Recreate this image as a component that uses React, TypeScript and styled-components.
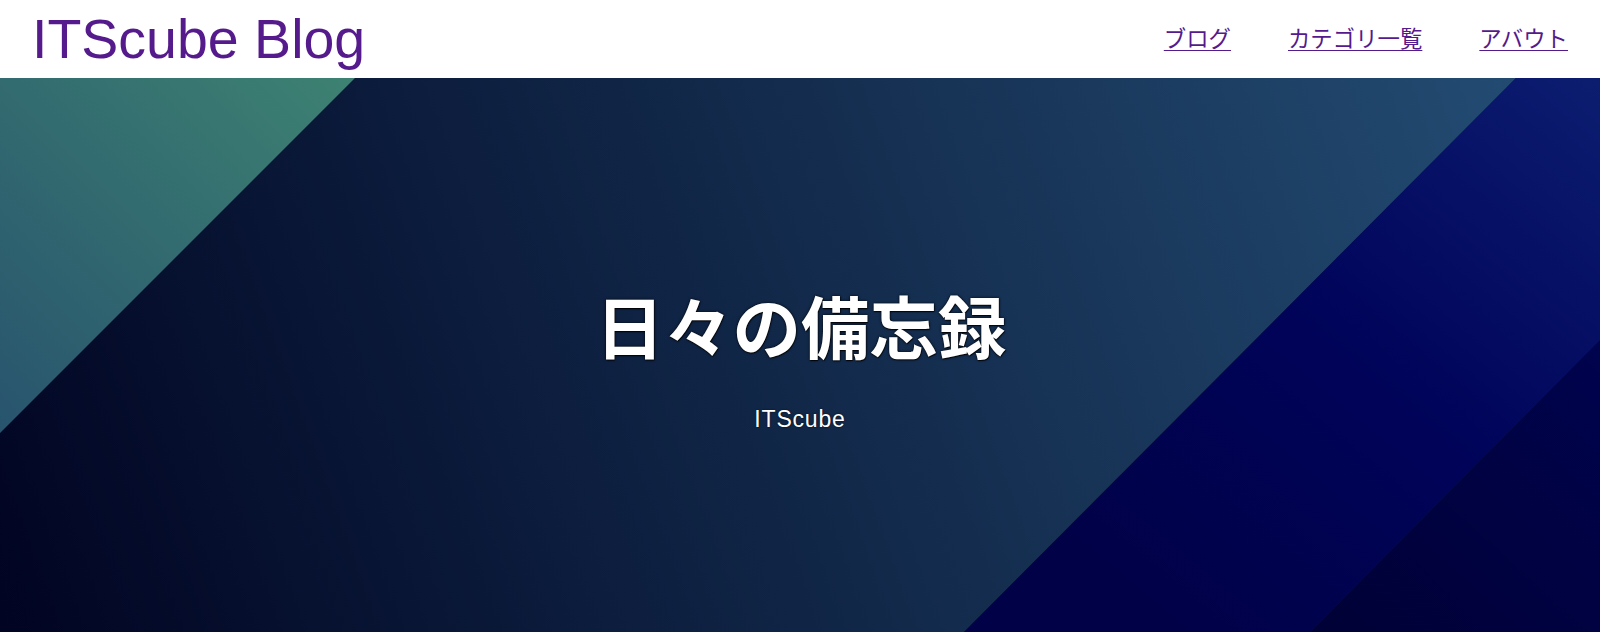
import React from "react";
import styled, { createGlobalStyle } from "styled-components";

const GlobalStyle = createGlobalStyle`
  html, body {
    margin: 0;
    padding: 0;
    background: #ffffff;
    font-family: "Liberation Sans", "Noto Sans CJK JP", sans-serif;
  }
  * { box-sizing: border-box; }
`;

const Page = styled.div`
  display: flex;
  flex-direction: column;
  min-height: 100vh;
`;

const Header = styled.header`
  display: flex;
  align-items: flex-start;
  justify-content: space-between;
  height: 78px;
  padding: 0 32px 0 32px;
  background: #ffffff;
`;

const Logo = styled.a`
  margin-top: 12px;
  font-family: "Liberation Sans", Arial, sans-serif;
  font-size: 55.5px;
  line-height: 1;
  font-weight: 400;
  color: #551a8b;
  text-decoration: none;
  white-space: nowrap;
`;

const Nav = styled.nav`
  display: flex;
  gap: 57px;
  margin-top: 26px;
`;

const NavLink = styled.a`
  font-family: "Noto Sans CJK JP", "Liberation Sans", sans-serif;
  font-size: 22.4px;
  line-height: 1;
  color: #551a8b;
  text-decoration: underline;
  text-underline-offset: 3px;
  text-decoration-thickness: 1px;
  white-space: nowrap;
`;

const Hero = styled.section`
  position: relative;
  flex: 1;
  min-height: 554px;
  display: flex;
  flex-direction: column;
  align-items: center;
  padding-top: 206px;
  overflow: hidden;
  background: #0a1838;
`;

const Backdrop = styled.svg`
  position: absolute;
  inset: 0;
  width: 100%;
  height: 100%;
  display: block;
`;

const Title = styled.h1`
  position: relative;
  margin: 0;
  font-family: "Noto Sans CJK JP", sans-serif;
  font-size: 68.5px;
  line-height: 1.2;
  font-weight: 700;
  color: #ffffff;
  text-shadow: 0 0 3px rgba(0, 0, 0, 0.95), 0.5px 0.5px 1px rgba(0, 0, 0, 0.8);
  padding-left: 2px;
`;

const Subtitle = styled.p`
  position: relative;
  margin: 40px 0 0;
  font-family: "Liberation Sans", Arial, sans-serif;
  font-size: 23px;
  line-height: 1.2;
  letter-spacing: 0.8px;
  color: #ffffff;
  text-shadow: 0 0 2px rgba(0, 0, 0, 0.8);
`;

function HeroArt() {
  return (
    <Backdrop viewBox="0 0 1600 554" preserveAspectRatio="none" aria-hidden>
      <defs>
        <linearGradient id="g1" gradientUnits="userSpaceOnUse" x1="0" y1="355" x2="355" y2="0">
          <stop offset="0" stopColor="#28546e" />
          <stop offset="1" stopColor="#3d8272" />
        </linearGradient>
        <linearGradient id="g2" gradientUnits="userSpaceOnUse" x1="0" y1="554" x2="1516" y2="0">
          <stop offset="0" stopColor="#010422" />
          <stop offset="0.5" stopColor="#112748" />
          <stop offset="1" stopColor="#234b72" />
        </linearGradient>
        <linearGradient id="g3" gradientUnits="userSpaceOnUse" x1="1140" y1="554" x2="1600" y2="0">
          <stop offset="0" stopColor="#000146" />
          <stop offset="0.5" stopColor="#00045a" />
          <stop offset="1" stopColor="#0c1d70" />
        </linearGradient>
        <linearGradient id="g4" gradientUnits="userSpaceOnUse" x1="1330" y1="554" x2="1600" y2="262">
          <stop offset="0" stopColor="#000136" />
          <stop offset="1" stopColor="#00034e" />
        </linearGradient>
      </defs>
      <polygon points="355,0 1516,0 964,554 0,554 0,355" fill="url(#g2)" />
      <polygon points="0,0 355,0 0,355" fill="url(#g1)" />
      <polygon points="1516,0 1600,0 1600,262 1310,554 964,554" fill="url(#g3)" />
      <polygon points="1600,262 1600,554 1310,554" fill="url(#g4)" />
    </Backdrop>
  );
}

export default function App() {
  return (
    <>
      <GlobalStyle />
      <Page>
        <Header>
          <Logo href="#">ITScube Blog</Logo>
          <Nav>
            <NavLink href="#">ブログ</NavLink>
            <NavLink href="#">カテゴリ一覧</NavLink>
            <NavLink href="#">アバウト</NavLink>
          </Nav>
        </Header>
        <Hero>
          <HeroArt />
          <Title>日々の備忘録</Title>
          <Subtitle>ITScube</Subtitle>
        </Hero>
      </Page>
    </>
  );
}
